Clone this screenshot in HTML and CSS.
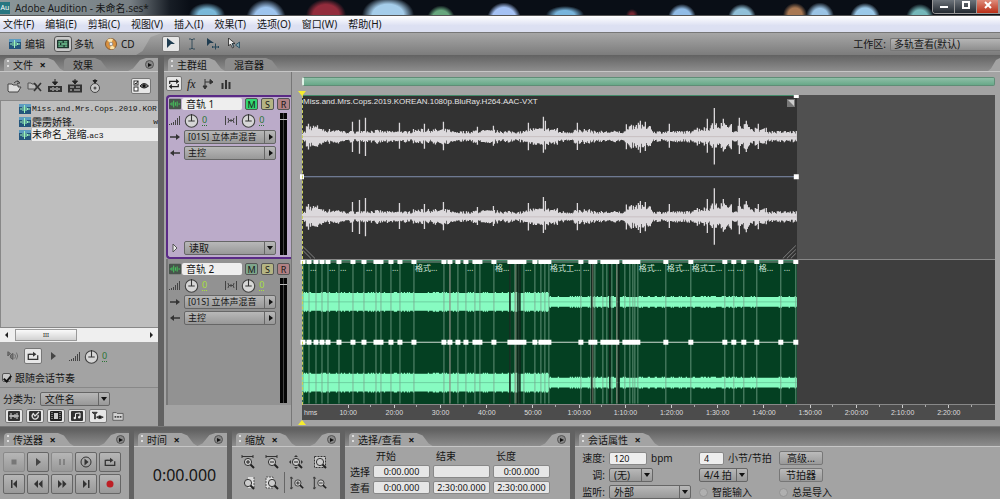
FILE: index.html
```html
<!DOCTYPE html>
<html lang="zh-CN">
<head>
  <meta charset="UTF-8">
  <meta name="viewport" content="width=device-width, initial-scale=1.0">
  <title>Adobe Audition - 未命名.ses*</title>
  <link rel="stylesheet" href="styles.css">
</head>
<body>

  <svg class="defs" aria-hidden="true">
    <symbol id="i-wave" viewBox="0 0 12 10"><rect width="12" height="10" fill="#24557c"/><rect width="12" height="3" fill="#5c9cc0"/><path d="M1 5h2M4 3v4M5.500 1v8M7 3v4M8.500 4v2M9 5h2" stroke="#9cf5ba"/></symbol>
    <symbol id="i-multi" viewBox="0 0 14 10"><rect width="14" height="10" rx="1" fill="#1d332d"/><path d="M1.500 2.500h5M8 2.500h4M1.500 5h2M5 5h7M1.500 7.500h6M9 7.500h3" stroke="#75cf9a" stroke-width="1.500"/></symbol>
    <symbol id="i-cd" viewBox="0 0 12 12"><circle cx="6" cy="6" r="5.500" fill="#d9913e" stroke="#815a34"/><path d="M6 6L2 2A5.500 5.500 0 0 1 8 1zM6 6l4 4a5 5 0 0 1-5 1z" fill="#ffe4a8"/><circle cx="6" cy="6" r="1.800" fill="#eee" stroke="#777" stroke-width=".7"/></symbol>
    <symbol id="i-cursor" viewBox="0 0 12 12"><path d="M2 0l8 6H6L2 10z" fill="#1f3c50"/></symbol>
    <symbol id="i-ibeam" viewBox="0 0 12 12"><path d="M3 1h2l1 1 1-1h2M6 2v8M3 11h2l1-1 1 1h2" fill="none" stroke="#344c5b"/></symbol>
    <symbol id="i-movetool" viewBox="0 0 14 12"><path d="M1 0l7 5H4L1 8z" fill="#1f3c50"/><path d="M6 9h7M9.500 5.500v6M7 8L6 9l1 1M12 8l1 1-1 1" fill="none" stroke="#28485a"/></symbol>
    <symbol id="i-scrub" viewBox="0 0 14 12"><path d="M1.500 0v8l2-2 2 4 1.500-1-2-3.500H8z" fill="#eee" stroke="#222" stroke-width=".8"/><path d="M12.500 4v6L8.500 7zM6 5v4" fill="#789da9" stroke="#24485c" stroke-width=".8"/></symbol>
    <symbol id="i-open" viewBox="0 0 16 14"><path d="M1 12V5h4l1 1h5v2h3l-3 5H2z" fill="#ddd" stroke="#444"/><path d="M7 4q2-3 5-1M10.500 1.500L13 4l-3 .5" fill="none" stroke="#444"/></symbol>
    <symbol id="i-close-file" viewBox="0 0 16 14"><path d="M1 10V4h3l1 1h4v5z" fill="#bbb" stroke="#555"/><path d="M7 4l7 8M14 4l-7 8" stroke="#333" stroke-width="1.600"/></symbol>
    <symbol id="i-insert" viewBox="0 0 14 14"><path d="M7 0v4M4.500 3L7 6l2.500-3z" fill="#222" stroke="#222"/><rect y="7" width="14" height="6" fill="#333"/><path d="M2 10h2M5 8v4M7 9v2M9 8v4M10 10h2" stroke="#ddd"/></symbol>
    <symbol id="i-insert-multi" viewBox="0 0 14 14"><path d="M7 0v3M4.500 2L7 5l2.500-3z" fill="#222" stroke="#222"/><rect y="5.500" width="14" height="8" fill="#333"/><path d="M2 8h4M8 8h4M2 11h2M6 11h6" stroke="#ccc"/></symbol>
    <symbol id="i-insert-cd" viewBox="0 0 14 14"><path d="M7 0v2M5 1.500L7 4l2-2.500z" fill="#222" stroke="#222"/><circle cx="7" cy="9" r="4.500" fill="#c8c8c8" stroke="#444"/><circle cx="7" cy="9" r="1.500" fill="#555"/></symbol>
    <symbol id="i-options" viewBox="0 0 16 12"><rect x="1" y="1" width="4" height="4" fill="#fff" stroke="#333"/><rect x="1" y="7" width="4" height="4" fill="#fff" stroke="#333"/><path d="M2 3l1 1 2-3" fill="none" stroke="#222"/><path d="M7 6q4-5 8.500 0-4.500 4-8.500 0z" fill="#777" stroke="#222"/><circle cx="11" cy="5.800" r="1.600" fill="#111"/></symbol>
    <symbol id="i-swap" viewBox="0 0 14 12"><path d="M2 6V3h9M2.500 9H12V6" fill="none" stroke="#222" stroke-width="1.400"/><path d="M9.500 0L13 3 9.500 6zM4.500 6L1 9l3.500 3z" fill="#222"/></symbol>
    <symbol id="i-send" viewBox="0 0 12 12"><path d="M3 1v8M1 8l2 3 2-3zM3 4h7M8 1.500L11 4 8 6z" fill="#333" stroke="#333"/></symbol>
    <symbol id="i-eq" viewBox="0 0 12 12"><path d="M2.500 5v6M6 2v9M9.500 4v7" stroke="#333" stroke-width="2"/></symbol>
    <symbol id="i-trackwave" viewBox="0 0 14 12"><rect width="14" height="12" rx="1" fill="#47534b"/><path d="M1 6h2M3.500 4v4M5.500 2v8M7.500 4v4M9.500 3v6M11 6h2" stroke="#45dc60"/></symbol>
    <symbol id="i-level" viewBox="0 0 12 12"><path d="M.5 11v-1M2.500 11V9M4.500 11V8M6.500 11V6M8.500 11V4M10.500 11V2" stroke="#444"/></symbol>
    <symbol id="i-pan" viewBox="0 0 14 12"><path d="M1.500 2v9M12.500 2v9M4 4q1.500 2.500 0 5M10 4q-1.500 2.500 0 5M5 6.500h4M7 5v3" fill="none" stroke="#444"/></symbol>
    <symbol id="i-knob" viewBox="0 0 14 14"><circle cx="7" cy="7.500" r="5.800" fill="#d6d6d6" stroke="#424242"/><path d="M7 1v7M4 7.500h6" stroke="#333"/></symbol>
    <symbol id="i-in" viewBox="0 0 12 10"><path d="M1 5h8" stroke="#333" stroke-width="1.500"/><path d="M7 2l4 3-4 3z" fill="#333"/></symbol>
    <symbol id="i-out" viewBox="0 0 12 10"><path d="M11 5H3" stroke="#333" stroke-width="1.500"/><path d="M5 2L1 5l4 3z" fill="#333"/></symbol>
    <symbol id="i-speaker" viewBox="0 0 14 12"><path d="M1 1l3 2-3 3zM4 5l3-2v7L4 8z" fill="#777" stroke="#555"/><path d="M9 4q2 2 0 5M11 2q3 4 0 8" fill="none" stroke="#666"/></symbol>
    <symbol id="i-loop" viewBox="0 0 14 12"><path d="M4 4H1.500v6h11V5" fill="none" stroke="#333" stroke-width="1.500"/><path d="M3 4h5" stroke="#333" stroke-width="1.500"/><path d="M7 1l4 3-4 3z" fill="#333"/></symbol>
    <symbol id="i-play" viewBox="0 0 12 12"><path d="M4 2l5 4-5 4z" fill="#444"/></symbol>
    <symbol id="i-stop" viewBox="0 0 12 12"><path d="M3.500 3.500h5v5h-5z" fill="#777"/></symbol>
    <symbol id="i-pause" viewBox="0 0 12 12"><path d="M4 3v6M8 3v6" stroke="#777" stroke-width="1.500"/></symbol>
    <symbol id="i-playcircle" viewBox="0 0 12 12"><circle cx="6" cy="6" r="5" fill="none" stroke="#333"/><path d="M4.500 2.500v7L8.500 6z" fill="#333"/></symbol>
    <symbol id="i-first" viewBox="0 0 12 12"><path d="M3 2h1.500v8H3zM9 2v8L5 6z" fill="#333"/></symbol>
    <symbol id="i-rew" viewBox="0 0 12 12"><path d="M6 2v8L2 6zM10.500 2v8l-4-4z" fill="#333"/></symbol>
    <symbol id="i-ff" viewBox="0 0 12 12"><path d="M2 2v8l4-4zM6.500 2v8l4-4z" fill="#333"/></symbol>
    <symbol id="i-last" viewBox="0 0 12 12"><path d="M3 2v8l4-4zM8 2h1.500v8H8z" fill="#333"/></symbol>
    <symbol id="i-rec" viewBox="0 0 12 12"><circle cx="6" cy="6" r="3.500" fill="#be1f25"/></symbol>
    <symbol id="i-lens" viewBox="0 0 14 14"><circle cx="7" cy="7" r="3.600" fill="#ccc" stroke="#333"/><path d="M9.500 9.500L13 13" stroke="#222" stroke-width="2"/></symbol>
    <symbol id="i-zin" viewBox="0 0 14 14"><path d="M1 1.500h11M1 0v3M12 0v3" stroke="#333"/><use href="#i-lens"/><path d="M5 7h4M7 5v4" stroke="#222"/></symbol>
    <symbol id="i-zout" viewBox="0 0 14 14"><path d="M1 1.500h11M1 0v3M12 0v3" stroke="#333"/><use href="#i-lens"/><path d="M5 7h4" stroke="#222"/></symbol>
    <symbol id="i-zfull" viewBox="0 0 14 14"><path d="M7 0L5 2h4zM0 7l2-2v4zM14 7l-2-2v4zM7 14l-2-2h4z" fill="#333"/><use href="#i-lens"/><path d="M5 7h4" stroke="#222"/></symbol>
    <symbol id="i-zsel" viewBox="0 0 14 14"><rect x="1.500" y="1.500" width="11" height="11" fill="#c8c8c8" stroke="#333" stroke-dasharray="2 1"/><use href="#i-lens"/></symbol>
    <symbol id="i-zleft" viewBox="0 0 14 14"><path d="M7 1h6v11H7z" fill="#ddd"/><path d="M13 1v12" stroke="#555" stroke-dasharray="2 1"/><use href="#i-lens"/></symbol>
    <symbol id="i-zright" viewBox="0 0 14 14"><path d="M1 1h7v11H1z" fill="#ddd" stroke="#555" stroke-dasharray="2 1"/><use href="#i-lens"/></symbol>
    <symbol id="i-zvin" viewBox="0 0 16 14"><path d="M1.500 1v12M0 2l1.500-2L3 2M0 12l1.500 2L3 12" stroke="#222" fill="none"/><use href="#i-lens" x="2" width="14" height="14"/><path d="M7 7h4M9 5v4" stroke="#222"/></symbol>
    <symbol id="i-zvout" viewBox="0 0 16 14"><path d="M1.500 1v12M0 2l1.500-2L3 2M0 12l1.500 2L3 12" stroke="#222" fill="none"/><use href="#i-lens" x="2" width="14" height="14"/><path d="M7 7h4" stroke="#222"/></symbol>
    <symbol id="i-faudio" viewBox="0 0 12 10"><rect width="12" height="10" rx="1" fill="#333"/><path d="M1 5h10M3 2v6M5 4v2M7 3v4M9 2v6" stroke="#ddd"/></symbol>
    <symbol id="i-floop" viewBox="0 0 12 10"><rect width="12" height="10" rx="1" fill="#333"/><path d="M4 3a3 3 0 1 0 5 1M4 2l2 3 4-4" fill="none" stroke="#ddd" stroke-width="1.300"/></symbol>
    <symbol id="i-fvideo" viewBox="0 0 12 10"><rect width="12" height="10" rx="1" fill="#222"/><rect x="4" y="2" width="4" height="6" fill="#ccc"/><path d="M2 1v8M10 1v8" stroke="#ccc" stroke-dasharray="1 1"/></symbol>
    <symbol id="i-fmidi" viewBox="0 0 12 10"><rect width="12" height="10" rx="1" fill="#333"/><path d="M4.500 7V2.500L9 2v4" fill="none" stroke="#eee"/><circle cx="3.800" cy="7" r="1.200" fill="#eee"/><circle cx="8.200" cy="6.300" r="1.200" fill="#eee"/></symbol>
    <symbol id="i-filter" viewBox="0 0 16 12"><path d="M0 1h7L4.500 4v6h-1V4z" fill="#444" stroke="#222"/><path d="M6 7.500q4-4 9 0-5 4-9 0z" fill="#666" stroke="#222"/><circle cx="10.500" cy="7.500" r="1.500" fill="#111"/></symbol>
    <symbol id="i-folder" viewBox="0 0 14 12"><path d="M1 2h4l1 1h7v8H1z" fill="#d2d2d2" stroke="#555"/><path d="M3 7h2M6 7h2M9 7h2" stroke="#444" stroke-width="2"/></symbol>
  </svg>

  <header class="titlebar">
    <span class="app-logo">Au</span>
    <h1>Adobe Audition - 未命名.ses*</h1>
    <div class="window-buttons">
      <button aria-label="最小化"><svg viewBox="0 0 12 10"><path d="M2 6h8v2H2z" fill="#fff"/></svg></button>
      <button aria-label="还原"><svg viewBox="0 0 12 10"><path d="M3 2h6v6H3z" fill="none" stroke="#fff" stroke-width="2"/></svg></button>
      <button class="close" aria-label="关闭"><svg viewBox="0 0 12 10"><path d="M3 2l6 6M9 2L3 8" stroke="#fff" stroke-width="2"/></svg></button>
    </div>
  </header>

  <nav class="menubar">
    <a href="#">文件(F)</a>
    <a href="#">编辑(E)</a>
    <a href="#">剪辑(C)</a>
    <a href="#">视图(V)</a>
    <a href="#">插入(I)</a>
    <a href="#">效果(T)</a>
    <a href="#">选项(O)</a>
    <a href="#">窗口(W)</a>
    <a href="#">帮助(H)</a>
  </nav>

  <div class="toolbar">
    <div class="modes">
      <button><svg class="ico"><use href="#i-wave"/></svg>编辑</button>
      <button class="multi"><span class="pressed"><svg class="ico"><use href="#i-multi"/></svg></span>多轨</button>
      <button><svg class="ico"><use href="#i-cd"/></svg>CD</button>
    </div>
    <div class="tools">
      <button class="on" aria-label="混合工具"><svg class="ico"><use href="#i-cursor"/></svg></button>
      <button aria-label="时间选择"><svg class="ico"><use href="#i-ibeam"/></svg></button>
      <button aria-label="移动"><svg class="ico"><use href="#i-movetool"/></svg></button>
      <button aria-label="刷选"><svg class="ico"><use href="#i-scrub"/></svg></button>
    </div>
    <label for="workspace">工作区:</label>
    <select id="workspace"><option>多轨查看(默认)</option></select>
  </div>

  <main class="workspace">
    <section class="files">
      <div class="tabs">
        <button class="tab active">文件 <b>×</b></button>
        <button class="tab">效果</button>
        <span class="ear"><button aria-label="面板菜单"></button></span>
      </div>
      <div class="file-tools">
        <button aria-label="导入"><svg class="ico"><use href="#i-open"/></svg></button>
        <button aria-label="关闭文件"><svg class="ico"><use href="#i-close-file"/></svg></button>
        <button aria-label="编辑文件"><svg class="ico"><use href="#i-insert"/></svg></button>
        <button aria-label="插入多轨"><svg class="ico"><use href="#i-insert-multi"/></svg></button>
        <button aria-label="插入 CD"><svg class="ico"><use href="#i-insert-cd"/></svg></button>
        <button class="on options" aria-label="显示选项"><svg class="ico"><use href="#i-options"/></svg></button>
      </div>
      <ul class="file-list">
        <li><svg class="ico"><use href="#i-wave"/></svg><span class="mono">Miss.and.Mrs.Cops.2019.KOR</span></li>
        <li><svg class="ico"><use href="#i-wave"/></svg><span>霹雳娇锋.</span><span class="mono ext">w</span></li>
        <li class="selected"><svg class="ico"><use href="#i-wave"/></svg><span>未命名_混缩.<span class="mono">ac3</span></span></li>
      </ul>
      <div class="scrollbar"><i class="arrow left"></i><span class="thumb">III</span><i class="arrow right"></i></div>
      <div class="preview">
        <button aria-label="自动播放"><svg class="ico"><use href="#i-speaker"/></svg></button>
        <button class="on" aria-label="循环"><svg class="ico"><use href="#i-loop"/></svg></button>
        <button aria-label="播放"><svg class="ico"><use href="#i-play"/></svg></button>
        <svg class="ico level"><use href="#i-level"/></svg>
        <svg class="knob"><use href="#i-knob"/></svg>
        <span class="num">0</span>
      </div>
      <label class="follow"><input type="checkbox" checked>跟随会话节奏</label>
      <div class="sort">
        <label for="sort">分类为:</label>
        <span class="drop"><select id="sort"><option>文件名</option></select></span>
      </div>
      <div class="filters">
        <button class="on" aria-label="音频"><svg class="ico"><use href="#i-faudio"/></svg></button>
        <button class="on" aria-label="循环文件"><svg class="ico"><use href="#i-floop"/></svg></button>
        <button class="on" aria-label="视频"><svg class="ico"><use href="#i-fvideo"/></svg></button>
        <button class="on" aria-label="MIDI"><svg class="ico"><use href="#i-fmidi"/></svg></button>
        <button class="on" aria-label="过滤"><svg class="ico"><use href="#i-filter"/></svg></button>
        <button aria-label="完整路径"><svg class="ico"><use href="#i-folder"/></svg></button>
      </div>
    </section>

    <section class="session">
      <div class="tabs">
        <button class="tab active">主群组</button>
        <button class="tab">混音器</button>
        <span class="ear"></span>
      </div>
      <div class="session-body">
        <div class="controls">
          <div class="control-tools">
            <button class="on" aria-label="输入输出"><svg class="ico"><use href="#i-swap"/></svg></button>
            <button class="fx">fx</button>
            <button aria-label="发送"><svg class="ico"><use href="#i-send"/></svg></button>
            <button aria-label="均衡"><svg class="ico"><use href="#i-eq"/></svg></button>
          </div>
          <div class="track selected">
            <div class="track-head">
              <svg class="ico"><use href="#i-trackwave"/></svg>
              <input type="text" value="音轨 1" aria-label="音轨 1">
              <button class="mute">M</button><button class="solo">S</button><button class="arm">R</button>
            </div>
            <div class="track-main">
              <div class="track-row knobs">
                <svg class="ico"><use href="#i-level"/></svg><svg class="knob"><use href="#i-knob"/></svg><span class="num">0</span>
                <svg class="ico pan"><use href="#i-pan"/></svg><svg class="knob"><use href="#i-knob"/></svg><span class="num">0</span>
              </div>
              <div class="track-row"><svg class="ico"><use href="#i-in"/></svg><span class="drop side"><select aria-label="输入"><option>[01S] 立体声混音</option></select></span></div>
              <div class="track-row"><svg class="ico"><use href="#i-out"/></svg><span class="drop side"><select aria-label="输出"><option>主控</option></select></span></div>
              <div class="track-row automation"><svg class="ico" viewBox="0 0 12 12"><path d="M4 2l4 4-4 4z" fill="#eee" stroke="#555"/></svg><span class="drop"><select aria-label="自动化"><option>读取</option></select></span></div>
            </div>
            <div class="meter"></div>
          </div>
          <div class="track">
            <div class="track-head">
              <svg class="ico"><use href="#i-trackwave"/></svg>
              <input type="text" value="音轨 2" aria-label="音轨 2">
              <button class="mute">M</button><button class="solo">S</button><button class="arm">R</button>
            </div>
            <div class="track-main">
              <div class="track-row knobs">
                <svg class="ico"><use href="#i-level"/></svg><svg class="knob"><use href="#i-knob"/></svg><span class="num">0</span>
                <svg class="ico pan"><use href="#i-pan"/></svg><svg class="knob"><use href="#i-knob"/></svg><span class="num">0</span>
              </div>
              <div class="track-row"><svg class="ico"><use href="#i-in"/></svg><span class="drop side"><select aria-label="输入"><option>[01S] 立体声混音</option></select></span></div>
              <div class="track-row"><svg class="ico"><use href="#i-out"/></svg><span class="drop side"><select aria-label="输出"><option>主控</option></select></span></div>
            </div>
            <div class="meter"></div>
          </div>
        </div>

        <div class="timeline">
          <div class="overview"></div>
          <div class="lanes">
            <i class="playhead"></i>
            <div class="lane">
              <div class="clip dark">
                <svg id="wave1" viewBox="0 0 495 165" preserveAspectRatio="none"></svg>
                <span class="clip-name">Miss.and.Mrs.Cops.2019.KOREAN.1080p.BluRay.H264.AAC-VXT</span>
                <svg class="badge" viewBox="0 0 8 8"><rect width="8" height="8" fill="#777"/><path d="M1 1h6v6z" fill="#ccc"/></svg>
              </div>
            </div>
            <div class="lane second">
              <div class="clip green">
                <svg id="wave2" viewBox="0 0 495 143" preserveAspectRatio="none"></svg>
                <div class="clip-names" id="names"></div>
              </div>
            </div>
          </div>
          <div class="ruler">
            <span class="unit">hms</span>
            <div class="ticks">
              <span>10:00</span><span>20:00</span><span>30:00</span><span>40:00</span><span>50:00</span><span>1:00:00</span><span>1:10:00</span>
              <span>1:20:00</span><span>1:30:00</span><span>1:40:00</span><span>1:50:00</span><span>2:00:00</span><span>2:10:00</span><span>2:20:00</span>
            </div>
          </div>
        </div>
      </div>
    </section>
  </main>

  <div class="dock">
    <section class="transport">
      <div class="tabs"><button class="tab active">传送器 <b>×</b></button><span class="ear"><button aria-label="面板菜单"></button></span></div>
      <div class="transport-grid">
        <button class="off" aria-label="停止"><svg class="ico"><use href="#i-stop"/></svg></button>
        <button aria-label="播放"><svg class="ico"><use href="#i-play"/></svg></button>
        <button class="off" aria-label="暂停"><svg class="ico"><use href="#i-pause"/></svg></button>
        <button aria-label="从指针播放"><svg class="ico"><use href="#i-playcircle"/></svg></button>
        <button aria-label="循环播放"><svg class="ico"><use href="#i-loop"/></svg></button>
        <button aria-label="开头"><svg class="ico"><use href="#i-first"/></svg></button>
        <button aria-label="倒放"><svg class="ico"><use href="#i-rew"/></svg></button>
        <button aria-label="快进"><svg class="ico"><use href="#i-ff"/></svg></button>
        <button aria-label="结尾"><svg class="ico"><use href="#i-last"/></svg></button>
        <button aria-label="录音"><svg class="ico"><use href="#i-rec"/></svg></button>
      </div>
    </section>

    <section class="time">
      <div class="tabs"><button class="tab active">时间 <b>×</b></button><span class="ear"><button aria-label="面板菜单"></button></span></div>
      <output>0:00.000</output>
    </section>

    <section class="zoom">
      <div class="tabs"><button class="tab active">缩放 <b>×</b></button><span class="ear"><button aria-label="面板菜单"></button></span></div>
      <div class="zoom-grid">
        <button aria-label="水平放大"><svg class="ico"><use href="#i-zin"/></svg></button>
        <button aria-label="水平缩小"><svg class="ico"><use href="#i-zout"/></svg></button>
        <button aria-label="全部缩小"><svg class="ico"><use href="#i-zfull"/></svg></button>
        <button aria-label="缩放到选区"><svg class="ico"><use href="#i-zsel"/></svg></button>
        <button aria-label="选区左侧"><svg class="ico"><use href="#i-zleft"/></svg></button>
        <button aria-label="选区右侧"><svg class="ico"><use href="#i-zright"/></svg></button>
        <button class="sep" aria-label="垂直放大"><svg class="ico"><use href="#i-zvin"/></svg></button>
        <button aria-label="垂直缩小"><svg class="ico"><use href="#i-zvout"/></svg></button>
      </div>
    </section>

    <section class="selection">
      <div class="tabs"><button class="tab active">选择/查看 <b>×</b></button><span class="ear"><button aria-label="面板菜单"></button></span></div>
      <table>
        <tr><td></td><th>开始</th><th>结束</th><th>长度</th></tr>
        <tr><th>选择</th><td><input value="0:00.000" aria-label="选择开始"></td><td><input value="" aria-label="选择结束"></td><td><input value="0:00.000" aria-label="选择长度"></td></tr>
        <tr><th>查看</th><td><input value="0:00.000" aria-label="查看开始"></td><td><input value="2:30:00.000" aria-label="查看结束"></td><td><input value="2:30:00.000" aria-label="查看长度"></td></tr>
      </table>
    </section>

    <section class="props">
      <div class="tabs"><button class="tab active">会话属性 <b>×</b></button></div>
      <div class="props-grid">
        <label for="tempo">速度:</label>
        <div><input id="tempo" type="text" value="120"> bpm</div>
        <div><input id="beats" type="text" value="4"><label for="beats">小节/节拍</label></div>
        <button>高级...</button>
        <label for="key">调:</label>
        <div><span class="drop key"><select id="key"><option>(无)</option></select></span></div>
        <div><span class="drop meter-sel"><select aria-label="拍子"><option>4/4 拍</option></select></span></div>
        <button>节拍器</button>
        <label for="monitor">监听:</label>
        <div><span class="drop monitor"><select id="monitor"><option>外部</option></select></span></div>
        <label class="radio"><input type="radio" name="mode" disabled>智能输入</label>
        <label class="radio"><input type="radio" name="mode" disabled>总是导入</label>
      </div>
    </section>
  </div>

  <script src="script.js"></script>
</body>
</html>
```
FILE: styles.css
```css
:root {
  --panel: #a3a3a3;
  --gap: #626262;
  --ink: #151515;
  --purple: #5a2a86;
}

* {
  box-sizing: border-box;
}

body {
  margin: 0;
  height: 100vh;
  overflow: hidden;
  display: flex;
  flex-direction: column;
  background: var(--gap);
  color: var(--ink);
  font-family: "Noto Sans", "Noto Sans CJK SC", sans-serif;
  font-size: 10px;
  line-height: 12px;
}

button, input, select {
  font: inherit;
  color: inherit;
  margin: 0;
  padding: 0;
  border: 0;
  background: none;
  border-radius: 2px;
  min-width: 0;
}

select {
  appearance: none;
}

a {
  color: inherit;
  text-decoration: none;
}

.defs {
  position: absolute;
  width: 0;
  height: 0;
}

.ico {
  width: 12px;
  height: 12px;
  flex: none;
  display: block;
}

.knob {
  width: 15px;
  height: 15px;
  flex: none;
}

.on {
  background: #e6e6e6;
  border: 1px solid #777;
}

/* title bar */
.titlebar {
  display: flex;
  align-items: center;
  height: 16px;
  flex: none;
  background:
    radial-gradient(ellipse 18px 12px at 20.7% 100%, #79b8d8 0 50%, transparent),
    radial-gradient(circle at 26.6% 130%, #9dc4ee 0 12px, transparent 20px),
    radial-gradient(ellipse 20px 16px at 32.6% 100%, #922c3c 0 65%, transparent),
    radial-gradient(ellipse 26px 18px at 38.8% 100%, #a5cdea 0 60%, transparent),
    radial-gradient(circle at 44.1% 130%, #67a77e 0 9px, transparent 14px),
    radial-gradient(circle at 50.4% 130%, #a5c2f4 0 12px, transparent 17px),
    radial-gradient(ellipse 19px 9px at 56.5% 100%, #78b5dc 0 50%, transparent),
    radial-gradient(circle at 63.2% 100%, #752631 0 2px, transparent 6px),
    radial-gradient(circle at 68.2% 120%, #91bce6 0 9px, transparent 14px),
    radial-gradient(circle at 74.2% 120%, #91c0d8 0 9px, transparent 14px),
    radial-gradient(circle at 79.5% 100%, #a87853 0 7px, transparent 12px),
    radial-gradient(circle at 82% 110%, #9bc4e5 0 8px, transparent 14px),
    radial-gradient(circle at 86.5% 120%, #9ac8e8 0 10px, transparent 15px),
    radial-gradient(circle at 92% 120%, #75b8ba 0 8px, transparent 14px),
    linear-gradient(90deg, #8b979a, #777f84 13%, #171d25 17%, #090e16 19%);
  border-bottom: 1px solid #555;
}

.titlebar h1 {
  flex: 1;
  margin: 0;
  font-family: "Open Sans", "Noto Sans CJK SC", sans-serif;
  font-size: 10px;
  font-weight: normal;
}

.app-logo {
  width: 10px;
  height: 12px;
  margin-right: 5px;
  background: #277681;
  color: #fff;
  font-size: 7px;
  text-align: center;
}

.window-buttons {
  display: flex;
  align-self: flex-start;
  border: 1px solid #999;
  border-top: 0;
  border-radius: 0 0 0 4px;
  overflow: hidden;
}

.window-buttons button {
  width: 22px;
  height: 13px;
  display: flex;
  justify-content: center;
  border-right: 1px solid #999;
  border-radius: 0;
  background: linear-gradient(#6c737a, #242a31);
}

.window-buttons svg {
  width: 12px;
  height: 10px;
}

.window-buttons .close {
  background: linear-gradient(#df8c7b, #b92e16);
}

/* menu */
.menubar {
  display: flex;
  gap: 11px;
  flex: none;
  height: 16px;
  padding: 2px 3px;
  background: linear-gradient(#fff, #dce0f2 60%);
}

/* toolbar */
.toolbar {
  display: flex;
  align-items: center;
  flex: none;
  height: 23px;
  border-top: 1px solid #777;
  background: linear-gradient(#a6a6a6, #7c7c7c);
}

.modes {
  display: flex;
  align-items: center;
  gap: 9px;
  width: 162px;
  height: 22px;
  padding-left: 9px;
  background: linear-gradient(#b4b4b4, #999);
  clip-path: polygon(0 0, 100% 0, 93% 18%, 88% 82%, 84% 100%, 0 100%);
}

.modes button {
  display: flex;
  align-items: center;
  gap: 4px;
}

.modes .multi {
  gap: 2px;
  margin-right: 2px;
}

.modes .pressed {
  padding: 1px 2px;
  border: 1px solid #555;
  border-radius: 3px;
  background: #c8c8c8;
}

.tools {
  display: flex;
  gap: 3px;
  flex: 1;
}

.tools button {
  width: 18px;
  height: 16px;
  display: flex;
  align-items: center;
  justify-content: center;
}

.tools .ico {
  width: 14px;
}

.toolbar select {
  width: 110px;
  height: 13px;
  margin-left: 4px;
  padding-left: 3px;
  border: 1px solid #777;
  border-right: 0;
  border-radius: 2px 0 0 2px;
  background: linear-gradient(#b5b5b5, #8e8e8e);
  line-height: 11px;
}

/* panel tabs */
.tabs {
  display: flex;
  align-items: flex-end;
  height: 17px;
  flex: none;
  padding-left: 4px;
  background: linear-gradient(#626262, #8d8d8d);
  border-bottom: 1px solid #c6c6c6;
}

.tab {
  height: 13px;
  padding: 0 18px 0 9px;
  text-align: left;
  white-space: nowrap;
  border-radius: 4px 0 0 0;
  background: #8c8c8c;
  clip-path: polygon(0 0, calc(100% - 16px) 0, calc(100% - 10px) 20%, calc(100% - 4px) 80%, 100% 100%, 0 100%);
}

.tab.active {
  background:
    radial-gradient(#ddd 1px, transparent 1px) 2px 1px / 4px 4px no-repeat,
    radial-gradient(#ddd 1px, transparent 1px) 2px 6px / 4px 4px no-repeat,
    var(--panel);
}

.tab b {
  margin-left: 4px;
  font-size: 11px;
}

.ear {
  display: flex;
  justify-content: flex-end;
  align-items: center;
  width: 30px;
  height: 13px;
  margin-left: auto;
  padding-right: 4px;
  background: var(--panel);
  clip-path: polygon(0 100%, 5px 80%, 12px 15%, 18px 0, 100% 0, 100% 100%);
}

.session .ear {
  width: 12px;
  padding: 0;
  clip-path: polygon(0 100%, 3px 80%, 8px 15%, 12px 0, 100% 100%);
}

.ear button {
  width: 9px;
  height: 9px;
  display: flex;
  align-items: center;
  justify-content: center;
  border: 1px solid #555;
  border-radius: 50%;
  background: #888;
}

.ear button::before {
  content: "";
  border: 2px solid transparent;
  border-left: 4px solid #111;
  border-right: 0;
}

/* workspace */
.workspace {
  display: grid;
  grid-template-columns: 158px minmax(0, 1fr);
  gap: 6px;
  flex: 1;
  min-height: 0;
}

.files, .session {
  display: flex;
  flex-direction: column;
  min-height: 0;
  background: var(--panel);
}

.file-tools {
  display: flex;
  align-items: center;
  gap: 4px;
  height: 28px;
  flex: none;
  padding: 0 7px;
}

.file-tools .ico {
  width: 16px;
  height: 14px;
}

.file-tools .options {
  margin-left: auto;
  padding: 0 1px;
}

.file-list {
  flex: 1;
  margin: 0;
  padding: 1px 0 0;
  list-style: none;
  background: #bebebe;
  border: 1px solid #888;
  border-right: 0;
  overflow: hidden;
}

.file-list li {
  display: flex;
  align-items: center;
  gap: 1px;
  height: 13px;
  padding-left: 18px;
  white-space: nowrap;
}

.file-list .ico {
  height: 10px;
}

.file-list .selected {
  background: linear-gradient(90deg, transparent 31px, #ececec 31px);
}

.mono {
  font-family: "Liberation Mono", monospace;
  font-size: 8px;
}

.ext {
  margin-left: auto;
}

.scrollbar {
  display: flex;
  align-items: center;
  gap: 7px;
  height: 14px;
  flex: none;
  padding: 0 5px;
  background: #efefef;
}

.scrollbar .thumb {
  width: 62px;
  height: 12px;
  border: 1px solid #999;
  background: linear-gradient(#fafafa, #d2d2d2);
  font-size: 6px;
  line-height: 10px;
  text-align: center;
}

.arrow {
  border: 3px solid transparent;
}

.arrow.left {
  border-right-color: #222;
  border-left: 0;
}

.arrow.right {
  margin-left: auto;
  border-left-color: #222;
  border-right: 0;
}

.preview {
  display: flex;
  align-items: center;
  gap: 3px;
  height: 28px;
  flex: none;
  padding-left: 5px;
}

.preview button {
  padding: 1px 2px;
}

.preview .level {
  margin-left: 5px;
}

.num {
  color: #2c7436;
  border-bottom: 1px dotted #2c7436;
  font-size: 9px;
  line-height: 10px;
}

.follow {
  display: flex;
  align-items: center;
  gap: 4px;
  height: 15px;
  flex: none;
  padding-left: 2px;
}

.follow input {
  appearance: none;
  width: 9px;
  height: 9px;
  border: 1px solid #555;
  background: #c8c8c8;
}

.follow input::before {
  content: "";
  display: block;
  width: 3px;
  height: 6px;
  margin-left: 2px;
  border: solid #111;
  border-width: 0 2px 2px 0;
  transform: rotate(40deg);
}

.sort {
  display: flex;
  align-items: center;
  gap: 4px;
  height: 22px;
  flex: none;
  margin-top: 2px;
  padding-left: 3px;
  border-top: 1px solid #888;
}

.sort .drop {
  width: 70px;
}

.drop {
  position: relative;
  display: block;
  height: 14px;
}

.drop select {
  display: block;
  width: 100%;
  height: 100%;
  padding: 0 0 0 4px;
  border: 1px solid #666;
  background: linear-gradient(90deg, transparent calc(100% - 11px), #666 calc(100% - 11px), #666 calc(100% - 10px), transparent calc(100% - 10px)), linear-gradient(#b8b8b8, #989898);
}

.drop::after {
  content: "";
  position: absolute;
  right: 3px;
  top: 5px;
  border: 3px solid transparent;
  border-top: 4px solid #111;
  border-bottom: 0;
  pointer-events: none;
}

.drop.side select {
  padding-left: 3px;
  font-size: 9px;
}

.drop.side::after {
  top: 4px;
  border: 3px solid transparent;
  border-left: 4px solid #111;
  border-right: 0;
}

.filters {
  display: flex;
  gap: 3px;
  flex: none;
  padding: 0 5px 3px;
}

.filters button {
  padding: 0 2px;
}

/* track controls */
.session-body {
  display: grid;
  grid-template-columns: 128px minmax(0, 1fr);
  flex: 1;
  min-height: 0;
}

.controls {
  display: grid;
  grid-template-rows: 23px 165fr 146fr 21px;
  min-height: 0;
  border-right: 1px solid #777;
}

.control-tools {
  display: flex;
  align-items: center;
  gap: 4px;
  padding-left: 2px;
}

.control-tools button {
  height: 15px;
  padding: 0 1px;
}

.fx {
  font-family: "Liberation Serif", serif;
  font-size: 12px;
  font-style: italic;
}

.track {
  display: grid;
  grid-template-columns: minmax(0, 1fr) 8px;
  grid-template-rows: 14px minmax(0, 1fr);
  row-gap: 1px;
  margin-left: 2px;
  padding: 3px 3px 2px 1px;
  border-left: 2px solid #777;
  background: #929292;
}

.track.selected {
  border: 2px solid var(--purple);
  border-right: 0;
  border-radius: 4px 0 0 4px;
  padding-top: 0;
  background: #bbabc9;
}

.track-head {
  grid-column: 1 / 3;
  display: flex;
  align-items: center;
  gap: 3px;
  margin-right: -2px;
}

.track-head input {
  flex: 1;
  height: 12px;
  margin-left: -2px;
  padding-left: 4px;
  background: #eee;
}

.track-head button {
  width: 13px;
  height: 12px;
  border: 1px solid #555;
  font-size: 9px;
  line-height: 9px;
}

.mute {
  background: #7fa58b;
}

.selected .mute {
  background: #33d672;
}

.solo {
  background: #b4b483;
}

.arm {
  background: #b18184;
}

.track-main {
  display: flex;
  flex-direction: column;
  gap: 2px;
}

.track-row {
  display: flex;
  align-items: center;
  gap: 3px;
  height: 14px;
}

.track-row .drop {
  flex: 1;
  margin-right: 4px;
}

.knobs {
  height: 16px;
}

.pan {
  width: 14px;
  margin-left: 14px;
}

.track:not(.selected) .num {
  color: #a8e03c;
  border-color: #a8e03c;
}

.automation {
  margin-top: auto;
}

.meter {
  width: 7px;
  margin-top: 1px;
  background:
    linear-gradient(#bbb, #bbb) 0 6px / 100% 1px no-repeat,
    linear-gradient(90deg, #050505 3px, #444 3px, #444 4px, #050505 4px);
}

/* timeline */
.timeline {
  display: grid;
  grid-template-rows: 23px minmax(0, 1fr) 15px 6px;
  padding: 0 5px 0 10px;
  min-height: 0;
}

.overview {
  height: 9px;
  margin-top: 5px;
  border: 1px solid #5f8d76;
  border-left: 2px solid #dff2e6;
  border-radius: 2px;
  background: linear-gradient(#8fbfa8, #68a888);
}

.lanes {
  position: relative;
  display: grid;
  grid-template-rows: 166fr 145fr;
  min-height: 0;
}

.lane {
  min-height: 0;
  background: #505050;
  border-bottom: 1px solid #888;
}

.lane.second {
  background: #3e3e3e;
}

.clip {
  position: relative;
  width: 71.4%;
  height: 100%;
  background: #323232;
  border-top: 1px solid #438b6a;
}

.clip.green {
  background: #044022;
}

.clip > svg:first-child {
  display: block;
  width: 100%;
  height: 100%;
  overflow: visible;
}

.clip-name {
  position: absolute;
  left: 1px;
  top: 1px;
  color: #e4e4e4;
  font-family: "Liberation Sans", sans-serif;
  font-size: 8px;
  line-height: 10px;
  white-space: nowrap;
}

.clip-names span {
  position: absolute;
  top: 2px;
  color: #d4e8dc;
  font-size: 8px;
  line-height: 10px;
  white-space: nowrap;
}

.badge {
  position: absolute;
  right: 2px;
  top: 3px;
  width: 8px;
  height: 8px;
}

.playhead {
  position: absolute;
  z-index: 1;
  left: 0;
  top: 0;
  bottom: 0;
  border-left: 1px dashed #c9cf58;
}

.playhead::before,
.playhead::after {
  content: "";
  position: absolute;
  left: -5px;
  top: -4px;
  border: 4px solid transparent;
  border-top: 5px solid #f5ec2e;
  border-bottom: 0;
}

.playhead::after {
  top: auto;
  bottom: -20px;
  border: 4px solid transparent;
  border-bottom: 5px solid #f5ec2e;
  border-top: 0;
}

.ruler {
  position: relative;
  background: #4c4c4c;
  color: #ddd;
  font-family: "Liberation Sans", sans-serif;
  font-size: 7px;
  line-height: 16px;
}

.unit {
  position: absolute;
  left: 2px;
}

.ticks {
  display: grid;
  grid-template-columns: repeat(14, minmax(0, 1fr));
  height: 100%;
  margin: 0 3.3333%;
  text-align: center;
}

.ticks span {
  background:
    linear-gradient(#ccc, #ccc) 50% 0 / 1px 3px no-repeat,
    linear-gradient(#aaa, #aaa) 100% 0 / 1px 2px no-repeat;
}

/* bottom dock */
.dock {
  display: grid;
  grid-template-columns: 129px 93px 108px 225px minmax(0, 1fr);
  gap: 5px;
  flex: none;
  padding-top: 3px;
  border-top: 1px solid #777;
}

.dock > section {
  background: var(--panel);
}

.transport-grid {
  display: grid;
  grid-template-columns: repeat(5, 22px);
  grid-auto-rows: 20px;
  gap: 2px;
  padding: 5px 3px;
}

.transport-grid button {
  display: flex;
  align-items: center;
  justify-content: center;
  border: 1px solid #666;
  background: linear-gradient(#b6b6b6, #999);
}

.transport-grid .off {
  border-color: #8a8a8a;
}

.time output {
  display: block;
  padding-top: 16px;
  padding-left: 8px;
  text-align: center;
  font-size: 16px;
  line-height: 24px;
}

.zoom-grid {
  display: grid;
  grid-template-columns: repeat(4, 24px);
  grid-auto-rows: 21px;
  padding: 4px;
}

.zoom-grid button {
  display: flex;
  align-items: center;
  justify-content: center;
}

.zoom-grid .ico {
  width: 14px;
  height: 14px;
}

.zoom-grid .sep {
  border-left: 1px solid #666;
  border-radius: 0;
}

.selection table {
  margin-left: 2px;
  border-spacing: 3px;
}

.selection td, .selection th {
  padding: 0;
  font-weight: normal;
}

.selection tr:first-child th {
  width: 57px;
  padding-left: 3px;
  line-height: 12px;
  text-align: left;
}

.selection input {
  display: block;
  width: 57px;
  height: 13px;
  border: 1px solid #888;
  background: #e6e6e6;
  font-size: 9px;
  text-align: center;
}

.props-grid {
  display: grid;
  grid-template-columns: 28px 86px 76px 60px;
  grid-auto-rows: 14px;
  gap: 3px 4px;
  align-items: center;
  padding: 4px 0 0 2px;
}

.props-grid > label:not(.radio) {
  text-align: right;
}

.props-grid > div {
  display: flex;
  align-items: center;
  gap: 4px;
}

.props-grid input[type="text"] {
  width: 38px;
  height: 13px;
  padding-left: 4px;
  border: 1px solid #888;
  background: #eee;
  font-size: 9px;
}

.props-grid #beats {
  width: 25px;
}

.props-grid > button {
  width: 44px;
  height: 14px;
  border: 1px solid #777;
  background: linear-gradient(#bbb, #999);
  line-height: 12px;
}

.key {
  width: 44px;
}

.meter-sel {
  width: 49px;
}

.monitor {
  width: 82px;
}

.radio {
  display: flex;
  align-items: center;
  gap: 4px;
  white-space: nowrap;
}

.radio input {
  appearance: none;
  width: 9px;
  height: 9px;
  border: 1px solid #939393;
  border-radius: 50%;
  background: #b0b0b0;
}
```
FILE: script.js
```js
const W = 495;

// small seeded generator, so the waves look the same on every load
let seed = 7;
function rnd() {
  seed = (seed * 16807) % 2147483647;
  return seed / 2147483647;
}

// [from, to, amplitude]
const loud = [
  [4, 20, 12], [20, 40, 8], [64, 80, 7], [110, 150, 8], [170, 200, 7], [222, 256, 9],
  [272, 290, 8], [324, 350, 14], [390, 408, 10], [408, 430, 14], [436, 450, 14], [450, 466, 9]
];

const peaks = {
  6: 13, 50: 15, 57: 17, 63: 19, 97: 14, 122: 13, 141: 15, 175: 10, 191: 11, 226: 14,
  241: 20, 243: 16, 275: 14, 338: 16, 343: 15, 367: 13, 405: 18, 412: 29, 421: 18,
  437: 19, 444: 16, 456: 13
};

function dialogue(cy, levels) {
  return levels.map((a, x) => `M${x + 0.5} ${cy - a[0]}V${cy + a[1]}`).join('');
}

const levels = [];
for (let x = 0; x < W; x++) {
  const zone = loud.find(z => x >= z[0] && x < z[1]);
  const base = zone ? zone[2] : 6;
  const a = peaks[x] || base * (0.5 + rnd() * 0.5);
  levels.push([a, a * (0.8 + rnd() * 0.25)]);
}

document.getElementById('wave1').innerHTML = `
  <path d="${dialogue(41, levels)}${dialogue(122, levels)}" stroke="#dcd9dc" stroke-width="1.300" fill="none"/>
  <path d="M0 41H495M0 122H495" stroke="#b5a3a7" stroke-width=".5"/>
  <path d="M0 81.500H495" stroke="#8190b0"/>
  <path d="M485 164l9-9M489 164l5-5M481 164l13-13M0 155l9 9M0 151l13 13" stroke="#999" stroke-width=".8"/>
  <path d="M492-1h5v3h-5zM492 79h5v5h-5zM-2 79h4v5h-4z" fill="#fff"/>`;

const cuts = [
  1, 7, 14, 20, 26, 37, 51, 62, 74, 79, 89, 98, 112, 142, 148, 156, 164, 173, 178, 192, 208, 213,
  217, 222, 233, 239, 243, 247, 279, 289, 293, 301, 305, 310, 315, 323, 328, 331, 333, 336,
  364, 389, 423, 432, 442, 455, 479, 494
];

let band = '';
for (let x = 0; x < W; x++) {
  if (x > 313 && x < 318) continue;
  const a = (x < 247 ? 9 : 5) + (rnd() > 0.75 ? 1 : 0);
  band += `M${x + 0.5} ${41 - a}V${41 + a}M${x + 0.5} ${122 - a}V${122 + a}`;
}

document.getElementById('wave2').innerHTML = `
  <path d="${band}" stroke="#87fbc1" stroke-width="1.300"/>
  <path d="M0 41H495M0 122H495" stroke="#5cb58b" stroke-width=".6"/>
  <path d="${cuts.map(x => `M${x} 0V143`).join('')}" stroke="#79a58d" stroke-width=".8"/>
  <path d="M208 0V143M216 0V143M218 0V143M290 0V143M308 0V143M317 0V143" stroke="#10241a" stroke-width="1.500"/>
  <path d="M148 0V143M214 0V143M291 0V143M315 0V143" stroke="#9a8580" stroke-width=".8"/>
  <path d="M0 81.500H495" stroke="#d3ded7"/>
  <path d="M0 1H495" stroke="#8b938f"/>
  <path d="${cuts.map(x => `M${x - 2.5}-1h5v4h-5zM${x - 2.5} 79h5v5h-5z`).join('')}" fill="#fff"/>`;

const names = [
  [8, '...'], [27, '...'], [38, '...'], [64, '...'], [90, '...'], [113, '格式...'], [165, '...'], [193, '格...'],
  [223, '...'], [248, '格式工...'], [281, '...'], [337, '格式...'], [365, '格式...'], [390, '格式工...'],
  [426, '...'], [435, '...'], [457, '格...'], [482, '...']
];

document.getElementById('names').innerHTML = names
  .map(n => `<span style="left:${n[0] / W * 100}%">${n[1]}</span>`)
  .join('');
```
